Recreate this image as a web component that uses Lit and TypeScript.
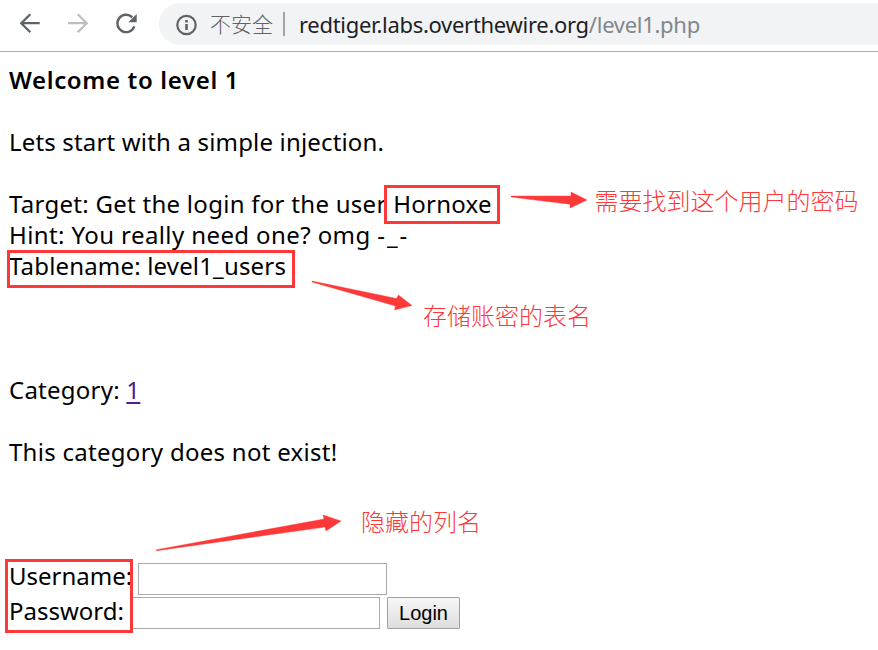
import { LitElement, html, css } from "lit";
import { customElement } from "lit/decorators.js";

@customElement("browser-bar")
class BrowserBar extends LitElement {
  static styles = css`
    :host {
      display: flex;
      box-sizing: border-box;
      height: 52px;
      padding-top: 3px;
      border-bottom: 1px solid #b1b1b1;
      background: #fff;
    }
    .nav {
      flex: none;
      width: 159px;
      height: 42px;
    }
    .omnibox {
      flex: 1;
      display: flex;
      align-items: center;
      height: 42px;
      border-radius: 21px 0 0 21px;
      background: #f1f3f4;
      white-space: nowrap;
    }
    .info {
      flex: none;
      width: 22px;
      height: 22px;
      margin: 1px 12px 0 17px;
    }
    .state {
      font: 300 21px/30px "Noto Sans CJK SC", sans-serif;
      color: #5f6368;
      width: 63px;
      margin-top: -2px;
    }
    .sep {
      width: 2px;
      height: 24px;
      margin: 0 14px 0 10px;
      background: #a2a4a6;
    }
    .url {
      font: 22px/30px "Noto Sans", "Open Sans", sans-serif;
      color: #202124;
      letter-spacing: -0.29px;
    }
    .path {
      color: #80868b;
    }
  `;
  render() {
    return html`
      <svg class="nav" viewBox="0 3 159 42" fill="none" stroke-width="2.3">
        <path d="M39.7 23.2H21.5M30.3 14.2L21.3 23.2L30.3 32.2" stroke="#5f6368" />
        <path d="M68 23.2H86.5M77.7 14.2L86.7 23.2L77.7 32.2" stroke="#bcbec0" />
        <path d="M132.3 17.3A8.7 8.7 0 1 0 134.3 26.3" stroke="#5f6368" stroke-width="2.4" />
        <path d="M136.7 13.9V22.2H128.3Z" fill="#5f6368" />
      </svg>
      <div class="omnibox">
        <svg class="info" viewBox="0 0 22 22">
          <circle cx="10.5" cy="11" r="9.2" fill="none" stroke="#5f6368" stroke-width="2.2" />
          <path d="M9.2 10H11.8V16H9.2ZM9.2 6H11.8V8.4H9.2Z" fill="#5f6368" />
        </svg>
        <span class="state">不安全</span>
        <span class="sep"></span>
        <span class="url">redtiger.labs.overthewire.org<span class="path">/level1.php</span></span>
      </div>
    `;
  }
}

@customElement("level-page")
class LevelPage extends LitElement {
  static styles = css`
    :host {
      display: block;
      padding: 12px 9px 0;
      font: 24px/31px "Noto Sans", "Open Sans", sans-serif;
      color: #000;
      white-space: nowrap;
    }
    .line {
      height: 31px;
    }
    .gap {
      margin-bottom: 31px;
    }
    .wide {
      margin-bottom: 93px;
    }
    .title { font-weight: 600; letter-spacing: 0.65px; }
    .intro { letter-spacing: 0.17px; }
    .target { letter-spacing: 0.28px; }
    .hint { letter-spacing: 0.4px; }
    .face { letter-spacing: 2px; }
    .table { letter-spacing: 0.17px; }
    .cat { letter-spacing: 0.24px; }
    .result { letter-spacing: 0.28px; }
    .link {
      color: #551a8b;
      text-decoration: underline;
      text-decoration-thickness: 2px;
      text-underline-offset: 3px;
    }
    .form {
      margin-top: 96px;
    }
    .row {
      display: flex;
      height: 32px;
      margin-bottom: 2px;
    }
    .label {
      box-sizing: border-box;
      height: 32px;
      line-height: 31px;
      margin-top: -3px;
    }
    .user { width: 129px; }
    .pass { width: 122px; margin-top: -2px; }
    .field {
      box-sizing: border-box;
      width: 249px;
      height: 32px;
      margin: 0;
      padding: 2px;
      border: 1px solid #a9a9a9;
      border-radius: 0;
      background: #fff;
    }
    .button {
      box-sizing: border-box;
      width: 73px;
      height: 32px;
      margin: 0 0 0 7px;
      padding: 0;
      border: 1px solid #a0a0a0;
      border-radius: 1px;
      background: linear-gradient(#f7f7f7, #dddddd);
      font: 20px/28px "Liberation Sans", sans-serif;
      color: #000;
    }
  `;
  render() {
    return html`
      <div class="line gap title">Welcome to level 1</div>
      <div class="line gap intro">Lets start with a simple injection.</div>
      <div class="line target">Target: Get the login for the user Hornoxe</div>
      <div class="line hint">Hint: You really need one? omg <span class="face">-_-</span></div>
      <div class="line wide table">Tablename: level1_users</div>
      <div class="line gap cat">Category: <a class="link">1</a></div>
      <div class="line result">This category does not exist!</div>
      <div class="form">
        <div class="row"><label class="label user">Username:</label><input class="field" /></div>
        <div class="row">
          <label class="label pass">Password:</label><input class="field" type="password" /><button class="button">Login</button>
        </div>
      </div>
    `;
  }
}

@customElement("markup-layer")
class MarkupLayer extends LitElement {
  static styles = css`
    :host {
      position: absolute;
      inset: 0;
      pointer-events: none;
    }
    .canvas {
      display: block;
      width: 878px;
      height: 650px;
    }
    .box {
      fill: none;
      stroke: #fc3838;
      stroke-width: 3;
    }
    .arrow {
      fill: #fc3838;
      stroke: #fc3838;
      stroke-width: 0.4;
    }
    .note {
      fill: #fc3838;
      font: 300 24px "Noto Sans CJK SC", sans-serif;
    }
  `;
  render() {
    return html`
      <svg class="canvas" viewBox="0 0 878 650">
        <rect class="box" x="385.5" y="186.5" width="113" height="36" />
        <rect class="box" x="8.5" y="251.5" width="285" height="35" />
        <rect class="box" x="6.5" y="560.5" width="125" height="71" />
        <path class="arrow" d="M511 196L571 196V192L587 200L570 208V204.3L511 197Z" />
        <path class="arrow" d="M312 281L396.5 298.5L398.5 295L412 305.5L394.5 310L395.5 306L312 282Z" />
        <path class="arrow" d="M156.5 549.8L324 519L323 515L341 521L326 531L325 527L156.5 550.8Z" />
        <text class="note" x="594.5" y="210">需要找到这个用户的密码</text>
        <text class="note" x="423" y="325">存储账密的表名</text>
        <text class="note" x="361" y="531">隐藏的列名</text>
      </svg>
    `;
  }
}

@customElement("app-root")
class AppRoot extends LitElement {
  static styles = css`
    :host {
      display: block;
      position: relative;
      height: 650px;
      overflow: hidden;
      background: #fff;
    }
  `;
  render() {
    return html`<browser-bar></browser-bar><level-page></level-page><markup-layer></markup-layer>`;
  }
}
